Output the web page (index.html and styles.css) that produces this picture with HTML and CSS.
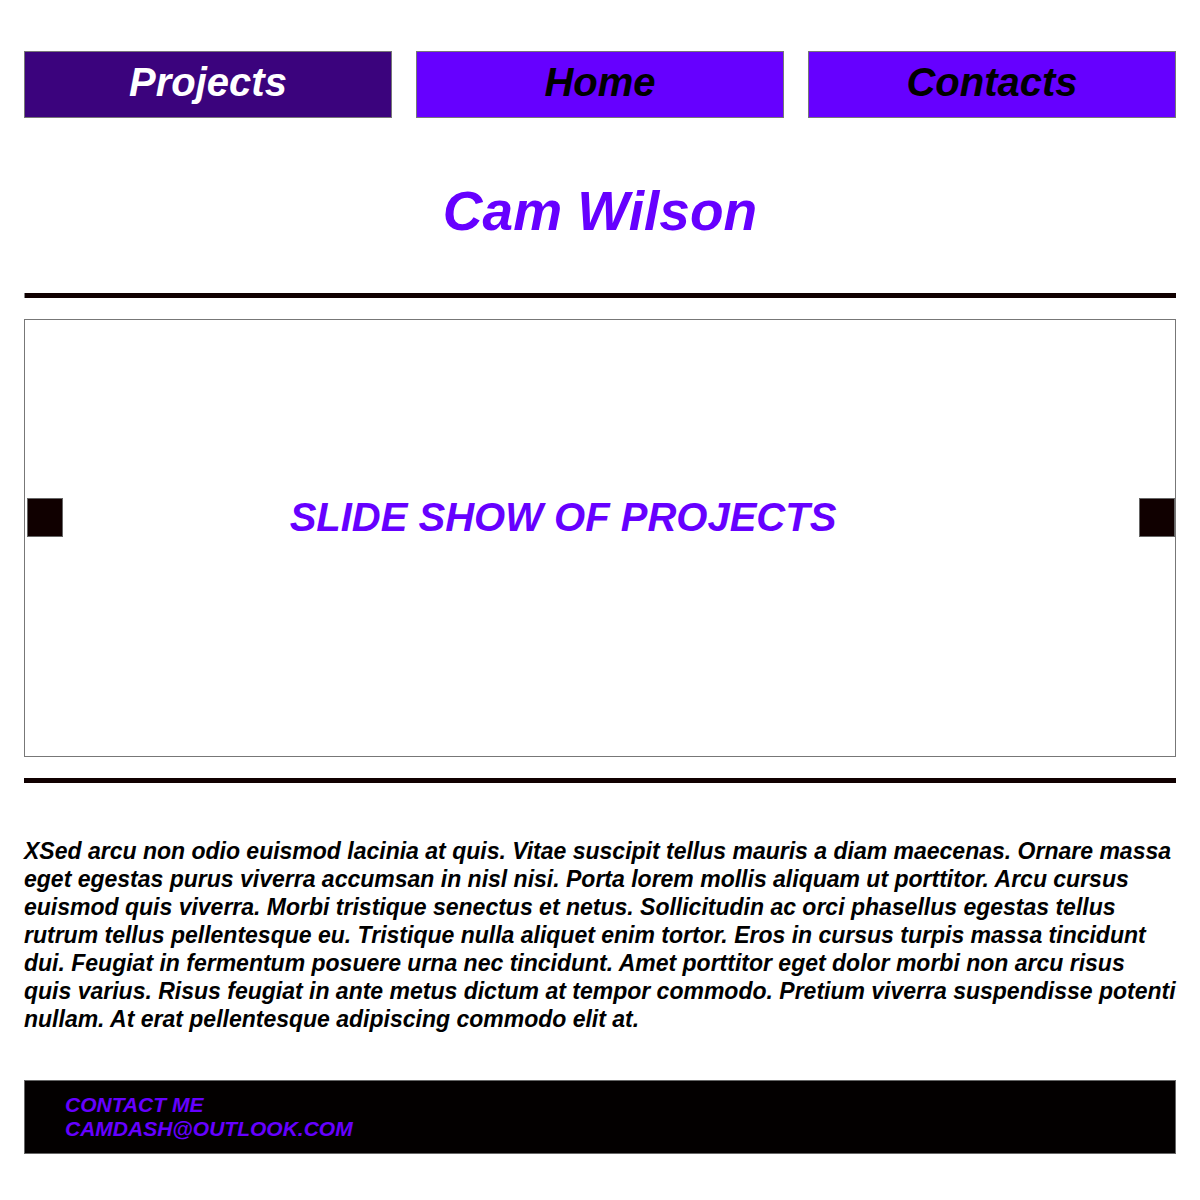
FILE: index.html
```html
<!DOCTYPE html>
<html lang="en">
<head>
<meta charset="utf-8">
<title>Cam Wilson</title>
<link rel="stylesheet" href="styles.css">
</head>
<body>
  <nav class="nav">
    <a class="nav-btn nav-btn--active" href="#">Projects</a>
    <a class="nav-btn" href="#">Home</a>
    <a class="nav-btn" href="#">Contacts</a>
  </nav>
  <h1 class="title">Cam Wilson</h1>
  <div class="rule rule--top"></div>
  <section class="slideshow">
    <button class="slide-arrow slide-arrow--left" aria-label="Previous"></button>
    <div class="slide-text">SLIDE SHOW OF PROJECTS</div>
    <button class="slide-arrow slide-arrow--right" aria-label="Next"></button>
  </section>
  <div class="rule rule--bottom"></div>
  <p class="about">XSed arcu non odio euismod lacinia at quis. Vitae suscipit tellus mauris a diam maecenas. Ornare massa eget egestas purus viverra accumsan in nisl nisi. Porta lorem mollis aliquam ut porttitor. Arcu cursus euismod quis viverra. Morbi tristique senectus et netus. Sollicitudin ac orci phasellus egestas tellus rutrum tellus pellentesque eu. Tristique nulla aliquet enim tortor. Eros in cursus turpis massa tincidunt dui. Feugiat in fermentum posuere urna nec tincidunt. Amet porttitor eget dolor morbi non arcu risus quis varius. Risus feugiat in ante metus dictum at tempor commodo. Pretium viverra suspendisse potenti nullam. At erat pellentesque adipiscing commodo elit at.</p>
  <footer class="footer">
    <ul class="footer-list">
      <li>CONTACT ME</li>
      <li>CAMDASH@OUTLOOK.COM</li>
    </ul>
  </footer>
</body>
</html>
```
FILE: styles.css
```css
* { box-sizing: border-box; }

body {
  margin: 0;
  padding: 51px 24px 0;
  font-family: "Liberation Sans", Arial, sans-serif;
  font-weight: bold;
  font-style: italic;
  background: #fff;
}

.nav {
  display: flex;
  gap: 24px;
}

.nav-btn {
  flex: 1;
  height: 67px;
  display: flex;
  align-items: center;
  justify-content: center;
  padding-bottom: 6px;
  background: #6600ff;
  border: 1px solid #777;
  color: #000;
  text-decoration: none;
  font-size: 40px;
  line-height: 1;
}

.nav-btn--active {
  background: #3b037d;
  color: #fff;
}

.title {
  margin: 0;
  padding-top: 61px;
  height: 175px;
  text-align: center;
  font-size: 55px;
  line-height: 64px;
  color: #6600ff;
  font-style: italic;
}

.rule {
  height: 5px;
  background: #100000;
}

.rule--top {
  border-left: 1px solid #888;
}

.slideshow {
  margin-top: 21px;
  height: 438px;
  border: 1px solid #777;
  display: flex;
  align-items: center;
  padding: 0 0 42px 2px;
}

.slide-arrow {
  width: 36px;
  height: 39px;
  padding: 0;
  background: #100000;
  border: 1px solid #666;
  flex: none;
}

.slide-text {
  flex: 1;
  text-align: center;
  padding-right: 76px;
  font-size: 40px;
  line-height: 44px;
  color: #6600ff;
}

.rule--bottom {
  margin-top: 21px;
}

.about {
  margin: 54px 0 0;
  font-size: 23px;
  line-height: 28px;
  color: #000;
}

.footer {
  margin-top: 47px;
  background: #030000;
  border: 1px solid #666;
  padding: 12px 0;
}

.footer-list {
  list-style: none;
  margin: 0;
  padding-left: 40px;
  font-size: 21px;
  line-height: 24px;
  color: #6600ff;
}
```
